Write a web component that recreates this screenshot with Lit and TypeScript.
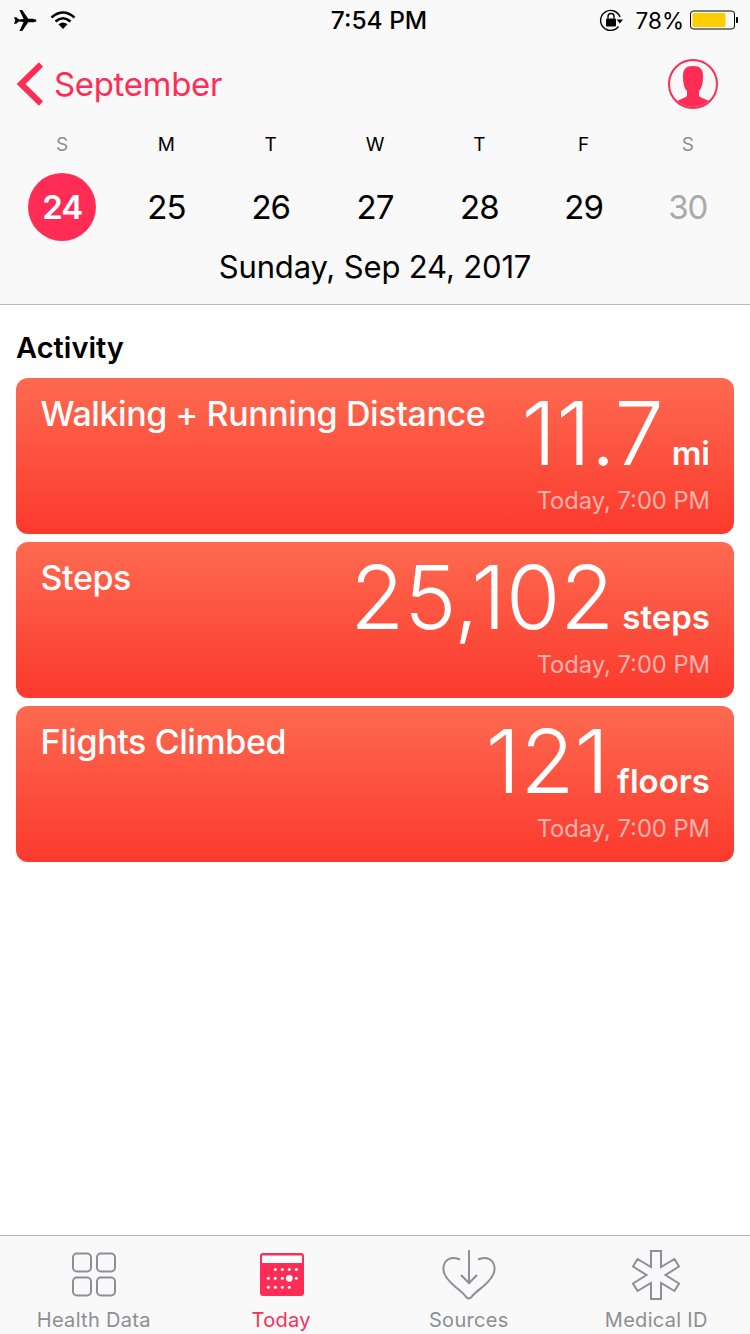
import { LitElement, html, css, svg } from "lit";
import { customElement } from "lit/decorators.js";

const days = [
  { l: "S", n: "24", cls: "sel", lc: "dim" },
  { l: "M", n: "25" },
  { l: "T", n: "26" },
  { l: "W", n: "27" },
  { l: "T", n: "28" },
  { l: "F", n: "29" },
  { l: "S", n: "30", cls: "off", lc: "dim" },
];

const cards = [
  { title: "Walking + Running Distance", value: "11.7", unit: "mi" },
  { title: "Steps", value: "25,102", unit: "steps" },
  { title: "Flights Climbed", value: "121", unit: "floors" },
];

// small dots of the Today tab icon, the big one for the current day is drawn apart
const dots = () => {
  const rows: number[][] = [
    [15.3, 22.3, 29.3, 36.3].map((x) => [x, 16.5]),
    [8.3, 15.3, 22.3, 36.3].map((x) => [x, 25.3]),
    [8.3, 15.3, 22.3, 29.3].map((x) => [x, 34.3]),
  ].flat();
  return rows.map(([x, y]) => svg`<circle cx=${x} cy=${y} r="1.5" fill="#fff"></circle>`);
};

@customElement("app-root")
export class AppRoot extends LitElement {
  static styles = css`
    :host {
      display: block;
      width: 750px;
      height: 1334px;
      background: #fff;
      font-family: Inter, "Liberation Sans", sans-serif;
      color: #000;
    }
    .page {
      display: flex;
      flex-direction: column;
      height: 1334px;
    }
    header {
      height: 304px;
      background: #f9f9f9;
      border-bottom: 1px solid #b9b9b9;
      flex: none;
    }
    .status {
      height: 40px;
      display: grid;
      grid-template-columns: 1fr auto 1fr;
      align-items: center;
      padding: 0 11px 0 13px;
    }
    .status .left,
    .status .right {
      display: flex;
      align-items: center;
    }
    .status .left {
      gap: 13px;
    }
    .status .right {
      justify-content: flex-end;
      gap: 6px;
    }
    .time {
      font-size: 24.5px;
      font-weight: 500;
      margin-left: 6px;
    }
    .pct {
      font-size: 22.5px;
      font-weight: 400;
      margin-left: 7px;
    }
    .nav {
      height: 88px;
      display: flex;
      align-items: center;
      justify-content: space-between;
      padding: 0 32px 0 16px;
    }
    .back {
      display: flex;
      align-items: center;
      gap: 10px;
      color: #ff2d55;
      font-size: 33px;
      font-weight: 400;
      letter-spacing: -0.35px;
    }
    .week {
      display: grid;
      grid-template-columns: repeat(7, 1fr);
      padding: 0 10px;
    }
    .day {
      display: flex;
      flex-direction: column;
      align-items: center;
    }
    .letter {
      font-size: 19px;
      height: 32px;
      line-height: 32px;
      margin-top: 1px;
    }
    .letter.dim {
      color: #8e8e93;
    }
    .num {
      width: 68px;
      height: 68px;
      margin-top: 12px;
      display: flex;
      align-items: center;
      justify-content: center;
      border-radius: 50%;
      font-size: 33px;
      font-weight: 400;
      letter-spacing: -1px;
    }
    .num.sel {
      background: #ff2d55;
      color: #fff;
      font-weight: 600;
    }
    .num.off {
      color: #aaaaae;
    }
    .date {
      text-align: center;
      font-size: 31px;
      line-height: 40px;
      margin-top: 6px;
      letter-spacing: -0.15px;
    }
    main {
      flex: 1;
      padding: 24px 16px 0;
    }
    h2 {
      margin: 0 0 11px 0;
      font-size: 29px;
      line-height: 38px;
      font-weight: 600;
      letter-spacing: 0;
    }
    .cards {
      display: flex;
      flex-direction: column;
      gap: 8px;
    }
    .card {
      height: 156px;
      box-sizing: border-box;
      border-radius: 12px;
      background: linear-gradient(#fe6a50, #fb392d);
      color: #fff;
      padding: 14px 24px 0 24.5px;
      display: flex;
      justify-content: space-between;
    }
    .title {
      font-size: 34px;
      line-height: 44px;
      font-weight: 500;
      letter-spacing: -0.4px;
    }
    .figure {
      display: flex;
      flex-direction: column;
      align-items: flex-end;
    }
    .reading {
      display: flex;
      align-items: baseline;
      gap: 8px;
      height: 94px;
      margin-top: -6px;
    }
    .value {
      font-size: 88px;
      line-height: 94px;
      font-weight: 280;
      letter-spacing: 0;
    }
    .unit {
      font-size: 33px;
      font-weight: 600;
    }
    .when {
      font-size: 23.7px;
      line-height: 32px;
      color: rgba(255, 255, 255, 0.6);
      margin-top: 5px;
    }
    nav {
      flex: none;
      height: 98px;
      background: #f9f9f9;
      border-top: 1px solid #b3b3b3;
      display: grid;
      grid-template-columns: repeat(4, 1fr);
    }
    .tab {
      display: flex;
      flex-direction: column;
      align-items: center;
      color: #8e8e93;
      font-size: 20px;
    }
    .tab.on {
      color: #ff2d55;
    }
    .tab .icon {
      height: 58px;
      margin-top: 10px;
      display: flex;
      align-items: center;
    }
    .tab span {
      line-height: 26px;
      letter-spacing: 0.3px;
      margin-top: 3px;
    }
  `;

  render() {
    return html`
      <div class="page">
        <header>
          <div class="status">
            <div class="left">
              <svg width="24" height="23" viewBox="0 0 26 24">
                <path fill="#000" d="M1 8.5 L3.5 8.5 L6.5 11 L11.5 10.5 L7 0.5 L10 0.5 L16.5 10 L22 10 Q25.5 10.5 25.5 12 Q25.5 13.5 22 14 L16.5 14 L10 23.5 L7 23.5 L11.5 13.5 L6.5 13 L3.5 15.5 L1 15.5 L2.5 12 Z"></path>
              </svg>
              <svg width="26" height="20" viewBox="0 0 26 20" fill="none" stroke="#000" stroke-width="2.6">
                <path d="M1.5 7.5 Q13 -2.5 24.5 7.5"></path>
                <path d="M5.5 11.5 Q13 5 20.5 11.5"></path>
                <path fill="#000" stroke="none" d="M8.5 14.2 Q13 10.8 17.5 14.2 L13 19 Z"></path>
              </svg>
            </div>
            <div class="time">7:54 PM</div>
            <div class="right">
              <svg width="24" height="24" viewBox="0 0 24 24" fill="none" stroke="#000" stroke-width="1.4">
                <path d="M21 9 A10 10 0 1 0 19.5 18.5"></path>
                <path fill="#000" stroke="none" d="M17.5 11.5 H24 L20.8 15.5 Z"></path>
                <rect x="7" y="10.5" width="10" height="8" rx="1" fill="#000" stroke="none"></rect>
                <path d="M9 10.5 V8.5 A3 3 0 0 1 15 8.5 V10.5"></path>
              </svg>
              <span class="pct">78%</span>
              <svg width="49" height="20" viewBox="0 0 49 20">
                <rect x="0.5" y="1" width="44" height="18" rx="3" fill="none" stroke="#000" stroke-width="1"></rect>
                <rect x="2.5" y="3" width="33" height="14" rx="1" fill="#ffcc00"></rect>
                <path d="M46 7 h1 a1 1 0 0 1 1 1 v4 a1 1 0 0 1 -1 1 h-1 z" fill="#000"></path>
              </svg>
            </div>
          </div>
          <div class="nav">
            <div class="back">
              <svg width="28" height="44" viewBox="0 0 28 44" fill="none" stroke="#ff2d55" stroke-width="6">
                <path d="M25 2.5 L5 22 L25 41.5"></path>
              </svg>
              September
            </div>
            <svg width="50" height="50" viewBox="0 0 50 50">
              <defs>
                <clipPath id="c"><circle cx="25" cy="25" r="23"></circle></clipPath>
              </defs>
              <circle cx="25" cy="25" r="24" fill="none" stroke="#ff2d55" stroke-width="2"></circle>
              <path clip-path="url(#c)" fill="#ff2d55" d="M25 7 C18 7 15 10 15 17 C15 24 16 29 19 32 L19 37 C16 40 8 41 4 46 L4 50 L47 50 L47 46 C42 41 34 40 31 37 L31 32 C34 29 35 24 35 17 C35 10 32 7 25 7 Z"></path>
            </svg>
          </div>
          <div class="week">
            ${days.map(
              (d) => html`
                <div class="day">
                  <div class="letter ${d.lc ?? ""}">${d.l}</div>
                  <div class="num ${d.cls ?? ""}">${d.n}</div>
                </div>
              `
            )}
          </div>
          <div class="date">Sunday, Sep 24, 2017</div>
        </header>
        <main>
          <h2>Activity</h2>
          <div class="cards">
            ${cards.map(
              (c) => html`
                <div class="card">
                  <div class="title">${c.title}</div>
                  <div class="figure">
                    <div class="reading">
                      <span class="value">${c.value}</span>
                      <span class="unit">${c.unit}</span>
                    </div>
                    <div class="when">Today, 7:00 PM</div>
                  </div>
                </div>
              `
            )}
          </div>
        </main>
        <nav>
          <div class="tab">
            <div class="icon">
              <svg width="46" height="46" viewBox="0 0 46 46" fill="none" stroke="#8e8e93" stroke-width="2">
                <rect x="2" y="1.5" width="18" height="18" rx="4"></rect>
                <rect x="26" y="1.5" width="18" height="18" rx="4"></rect>
                <rect x="2" y="25.5" width="18" height="18" rx="4"></rect>
                <rect x="26" y="25.5" width="18" height="18" rx="4"></rect>
              </svg>
            </div>
            <span>Health Data</span>
          </div>
          <div class="tab on">
            <div class="icon">
              <svg width="44" height="44" viewBox="0 0 44 44" style="margin-left:1px">
                <rect width="44" height="43" rx="3" fill="#ff2d55"></rect>
                <rect x="2" y="2.5" width="40" height="7.5" fill="#fff"></rect>
                ${dots()}
                <circle cx="29.3" cy="25.3" r="3.4" fill="#fff"></circle>
              </svg>
            </div>
            <span>Today</span>
          </div>
          <div class="tab">
            <div class="icon">
              <svg width="54" height="50" viewBox="0 0 54 50" fill="none" stroke="#8e8e93" stroke-width="2">
                <path d="M18 9.5 C15 8 12.5 7.7 10.5 8 C4 9 1 14 1.5 20 C2 26.5 7.5 32 13.5 37 C18 40.5 22 43.5 24.5 47.5 Q26.5 49.5 29 47.5 C32 43.5 36 40.5 40.5 37 C46.5 32 52 26.5 52.5 20 C53 14 50 9 43.5 8 C41.5 7.7 39 8 36 9.5"></path>
                <path d="M27 0 V33 M19 25 L27 33 L35 25"></path>
              </svg>
            </div>
            <span>Sources</span>
          </div>
          <div class="tab">
            <div class="icon">
              <svg width="50" height="50" viewBox="0 0 50 50" fill="none" stroke="#8e8e93" stroke-width="2">
                <path d="M20 1 H30 V17 L43.5 9 L48 16.5 L34.5 25 L48 33.5 L43.5 41 L30 33 V49 H20 V33 L6.5 41 L2 33.5 L15.5 25 L2 16.5 L6.5 9 L20 17 Z"></path>
              </svg>
            </div>
            <span>Medical ID</span>
          </div>
        </nav>
      </div>
    `;
  }
}
